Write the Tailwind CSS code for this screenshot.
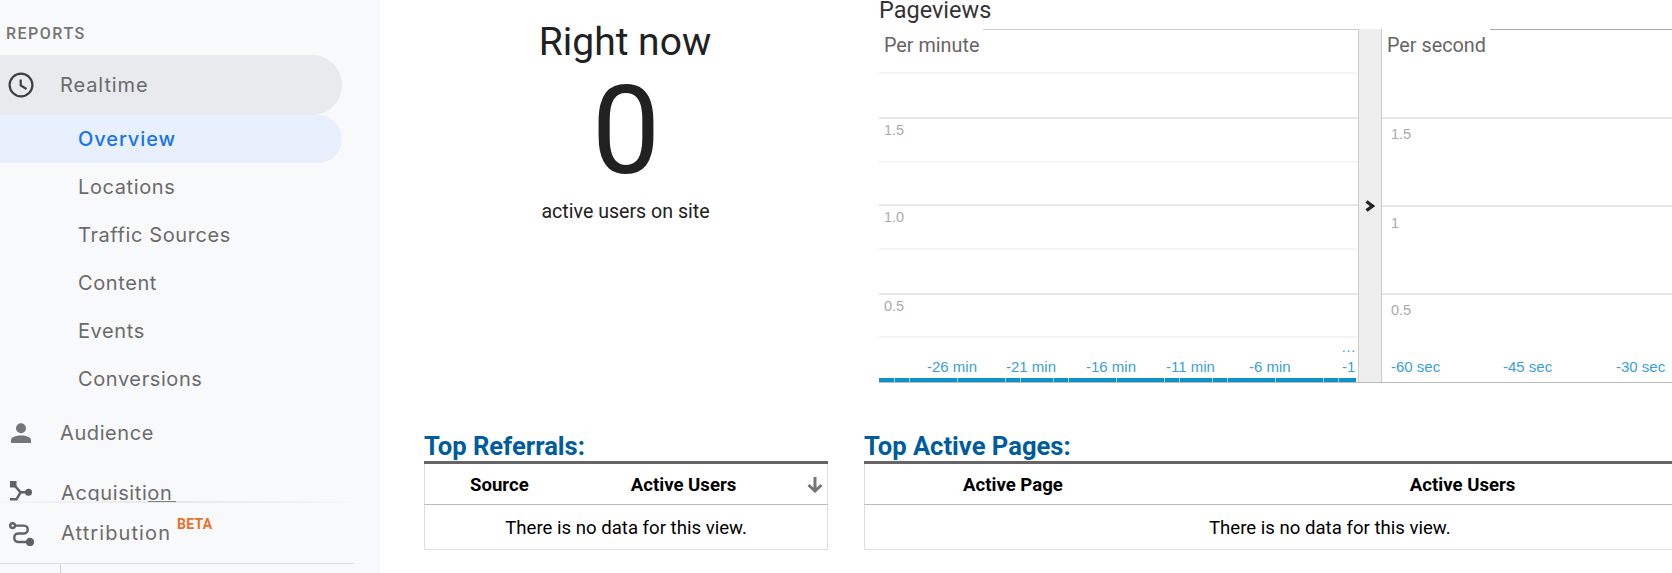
<!DOCTYPE html>
<html lang="en">
<head>
    <meta charset="UTF-8">
    <title>Realtime Overview</title>
    <script src="https://cdn.jsdelivr.net/npm/@tailwindcss/browser@4"></script>
</head>
<body class="w-[1672px] h-[573px] overflow-hidden bg-white font-['Roboto',sans-serif]">
    <div class="flex h-[573px]">
        <!-- sidebar -->
        <aside class="w-[380px] h-[573px] shrink-0 bg-[#f8f9fa] flex flex-col font-['Inter',sans-serif] text-[#6b6b6b] text-[20px] tracking-[0.6px]">
            <div class="h-[501px] overflow-hidden">
                <div class="h-[55px] pl-[6px] pt-[25px] text-[16px] leading-[18px] font-['Roboto',sans-serif] font-medium tracking-[1.5px] text-[#757575]">REPORTS</div>
                <div class="w-[342px] h-[60px] rounded-r-[30px] bg-[#e8eaed] flex items-center pl-[8px]">
                    <svg class="w-[26px] h-[26px]" viewBox="0 0 26 26" fill="none" stroke="#3c4043" stroke-width="2.2"><circle cx="13" cy="13" r="11.4"/><path d="M12.7 7.5V13.5L18.5 17"/></svg>
                    <span class="ml-[26px] tracking-[0.9px]">Realtime</span>
                </div>
                <div class="w-[342px] h-[48px] rounded-r-[24px] bg-[#e8f0fe] flex items-center pl-[78px] font-medium tracking-[0.9px] text-[#1a73e8]">Overview</div>
                <div class="h-[48px] flex items-center pl-[78px]">Locations</div>
                <div class="h-[48px] flex items-center pl-[78px]">Traffic Sources</div>
                <div class="h-[48px] flex items-center pl-[78px]">Content</div>
                <div class="h-[48px] flex items-center pl-[78px]">Events</div>
                <div class="h-[48px] flex items-center pl-[78px]">Conversions</div>
                <div class="h-[60px] flex items-center pl-[11px]">
                    <svg class="w-[20px] h-[20px]" viewBox="0 0 20 20" fill="#757575"><circle cx="10" cy="5.2" r="5"/><path d="M0 20V17C0 14 5 12.5 10 12.5S20 14 20 17V20Z"/></svg>
                    <span class="ml-[29px]">Audience</span>
                </div>
                <div class="h-[60px] flex items-center pl-[10px]">
                    <svg class="w-[22px] h-[22px] -mt-[2px]" viewBox="0 0 22 22" fill="#616161"><path d="M0 0H6.5V6.5H0Z"/><path d="M5 5L10.5 11.3H18" fill="none" stroke="#616161" stroke-width="2.6"/><circle cx="18.5" cy="11.3" r="3.5"/><path d="M0 18.3H6.5L10.5 11.3" fill="none" stroke="#616161" stroke-width="2.6"/></svg>
                    <span class="ml-[29px]">Acquisition</span>
                </div>
            </div>
            <div class="relative w-[354px] h-[2px] bg-gradient-to-r from-[#f5f6f7] via-[#e6e7e8] to-[#f6f7f8]">
                <div class="absolute left-[148px] top-0 w-[28px] h-[1px] bg-[#808080]"></div>
            </div>
            <div class="w-[354px] h-[61px] flex items-center pl-[9px] pb-[1px] border-b border-[#e0e0e0]">
                <svg class="w-[25px] h-[24px] mt-[2px]" viewBox="0 0 25 24" fill="none" stroke="#5f6368" stroke-width="2.4"><circle cx="3.6" cy="3.6" r="2.4"/><path d="M6 3.6H15C20 3.6 20 11.5 15 11.5H9C4 11.5 4 20 9 20H17"/><circle cx="21" cy="20" r="3" fill="#5f6368"/></svg>
                <span class="ml-[27px] tracking-[1.1px]">Attribution</span>
                <span class="ml-[6px] -mt-[18px] text-[14px] leading-[16px] font-['Roboto',sans-serif] font-bold tracking-[0.3px] text-[#e8712a]">BETA</span>
            </div>
            <div class="w-[61px] h-[9px] border-r border-[#d5d5d5]"></div>
        </aside>

        <!-- main -->
        <main class="flex-1 min-w-0 flex flex-col">
            <div class="flex h-[433px]">
                <div class="w-[490px] shrink-0 flex flex-col items-center pt-[18px] text-[#212121]">
                    <div class="text-[39px] leading-[48px]">Right now</div>
                    <div class="text-[122px] leading-[108px] mt-[12px] ml-[2px]">0</div>
                    <div class="text-[19.6px] leading-[24px] mt-[14px] ml-[1px]">active users on site</div>
                </div>
                <div class="w-[802px] shrink-0 ml-[9px]">
                    <div class="h-[29px] text-[23.5px] leading-[20px] text-[#333]">Pageviews</div>
                    <div class="flex h-[354px] w-[793px] border-b border-[#bbbbbb]">
                        <!-- per minute -->
                        <div class="w-[480px] h-[353px] relative border-t border-r border-[#cccccc]">
                            <div class="absolute left-0 -top-[1px] w-[104px] h-[43px] bg-white pl-[5px] pt-[5px] text-[19.8px] leading-[24px] text-[#666]">Per minute</div>
                            <div class="h-[44px] border-b-2 border-[#f5f5f5]"></div>
                            <div class="h-[45px] border-b-2 border-[#e8e8e8]"></div>
                            <div class="h-[44px] border-b-2 border-[#f5f5f5] pl-[5px] pt-[2px] text-[14.5px] leading-[18px] text-[#aaa] font-['Liberation_Sans',sans-serif]">1.5</div>
                            <div class="h-[43px] border-b-2 border-[#e8e8e8]"></div>
                            <div class="h-[44px] border-b-2 border-[#f5f5f5] pl-[5px] pt-[2px] text-[14.5px] leading-[18px] text-[#aaa] font-['Liberation_Sans',sans-serif]">1.0</div>
                            <div class="h-[45px] border-b-2 border-[#e8e8e8]"></div>
                            <div class="h-[43px] border-b-2 border-[#f5f5f5] pl-[5px] pt-[2px] text-[14.5px] leading-[18px] text-[#aaa] font-['Liberation_Sans',sans-serif]">0.5</div>
                            <div class="absolute left-0 bottom-0 flex w-[477px] h-[4px]">
                                <div class="w-[16px] bg-[#0e90c8] border-r border-white/60"></div>
                                <div class="w-[15px] bg-[#0e90c8] border-r border-white/60"></div>
                                <div class="w-[48px] bg-[#0e90c8] border-r border-white/60"></div>
                                <div class="w-[48px] bg-[#0e90c8] border-r border-white/60"></div>
                                <div class="w-[15px] bg-[#0e90c8] border-r border-white/60"></div>
                                <div class="w-[33px] bg-[#0e90c8] border-r border-white/60"></div>
                                <div class="w-[15px] bg-[#0e90c8] border-r border-white/60"></div>
                                <div class="w-[48px] bg-[#0e90c8] border-r border-white/60"></div>
                                <div class="w-[48px] bg-[#0e90c8] border-r border-white/60"></div>
                                <div class="w-[15px] bg-[#0e90c8] border-r border-white/60"></div>
                                <div class="w-[33px] bg-[#0e90c8] border-r border-white/60"></div>
                                <div class="w-[15px] bg-[#0e90c8] border-r border-white/60"></div>
                                <div class="w-[48px] bg-[#0e90c8] border-r border-white/60"></div>
                                <div class="w-[48px] bg-[#0e90c8] border-r border-white/60"></div>
                                <div class="w-[15px] bg-[#0e90c8] border-r border-white/60"></div>
                                <div class="w-[17px] bg-[#0e90c8]"></div>
                            </div>
                            <div class="absolute left-0 top-[328px] text-[15px] leading-[18px] text-[#3b9fd6] font-['Liberation_Sans',sans-serif]">
                                <span class="absolute left-[48px] whitespace-nowrap">-26 min</span>
                                <span class="absolute left-[127px] whitespace-nowrap">-21 min</span>
                                <span class="absolute left-[207px] whitespace-nowrap">-16 min</span>
                                <span class="absolute left-[287px] whitespace-nowrap">-11 min</span>
                                <span class="absolute left-[370px] whitespace-nowrap">-6 min</span>
                                <span class="absolute left-[463px] whitespace-nowrap">-1</span>
                                <span class="absolute left-[462px] -top-[20px] whitespace-nowrap">…</span>
                            </div>
                        </div>
                        <!-- toggle -->
                        <div class="w-[23px] h-[353px] bg-[#eeeeee] border-r border-[#cccccc] flex items-center justify-center">
                            <svg class="w-[10px] h-[12px]" viewBox="0 0 10 12" fill="none" stroke="#222" stroke-width="3.4"><path d="M1.5 1.5L7.5 6L1.5 10.5"/></svg>
                        </div>
                        <!-- per second -->
                        <div class="flex-1 h-[353px] relative border-t border-[#aaaaaa]">
                            <div class="absolute left-0 -top-[1px] w-[108px] h-[43px] bg-white pl-[5px] pt-[5px] text-[19.8px] leading-[24px] text-[#666]">Per second</div>
                            <div class="h-[89px] border-b-2 border-[#e8e8e8]"></div>
                            <div class="h-[88px] border-b-2 border-[#e8e8e8] pl-[9px] pt-[6px] text-[14.5px] leading-[18px] text-[#aaa] font-['Liberation_Sans',sans-serif]">1.5</div>
                            <div class="h-[88px] border-b-2 border-[#e8e8e8] pl-[9px] pt-[7px] text-[14.5px] leading-[18px] text-[#aaa] font-['Liberation_Sans',sans-serif]">1</div>
                            <div class="pl-[9px] pt-[6px] text-[14.5px] leading-[18px] text-[#aaa] font-['Liberation_Sans',sans-serif]">0.5</div>
                            <div class="absolute left-0 top-[328px] text-[15px] leading-[18px] text-[#3b9fd6] font-['Liberation_Sans',sans-serif]">
                                <span class="absolute left-[9px] whitespace-nowrap">-60 sec</span>
                                <span class="absolute left-[121px] whitespace-nowrap">-45 sec</span>
                                <span class="absolute left-[234px] whitespace-nowrap">-30 sec</span>
                            </div>
                        </div>
                    </div>
                </div>
            </div>
            <!-- tables -->
            <div class="flex pl-[44px] gap-[36px] text-black">
                <section class="w-[404px] shrink-0">
                    <h2 class="h-[28px] text-[25.6px] leading-[26px] font-bold text-[#005c9c]">Top Referrals:</h2>
                    <div class="border-t-[3px] border-[#666666]"></div>
                    <div class="flex items-center h-[41px] pt-[4px] border-x border-b border-x-[#dddddd] border-b-[#bbbbbb] text-[18.6px] font-bold">
                        <span class="ml-[45px]">Source</span>
                        <span class="ml-[102px]">Active Users</span>
                        <svg class="w-[16px] h-[16px] ml-[71px] -mt-[2px]" viewBox="0 0 16 16" fill="none" stroke="#757575" stroke-width="3"><path d="M8 0V14M1.5 8L8 14L14.5 8"/></svg>
                    </div>
                    <div class="flex items-center justify-center h-[45px] pt-[4px] border-x border-b border-[#dddddd] text-[18.6px]">There is no data for this view.</div>
                </section>
                <section class="flex-1 min-w-0">
                    <h2 class="h-[28px] text-[25.6px] leading-[26px] font-bold text-[#005c9c]">Top Active Pages:</h2>
                    <div class="border-t-[3px] border-[#666666]"></div>
                    <div class="flex items-center h-[41px] pt-[4px] border-l border-b border-l-[#dddddd] border-b-[#bbbbbb] text-[18.6px] font-bold">
                        <span class="ml-[98px]">Active Page</span>
                        <span class="ml-[347px]">Active Users</span>
                    </div>
                    <div class="flex items-center h-[45px] pt-[4px] border-l border-b border-[#dddddd] text-[18.6px] pl-[344px]">There is no data for this view.</div>
                </section>
            </div>
        </main>
    </div>
</body>
</html>
